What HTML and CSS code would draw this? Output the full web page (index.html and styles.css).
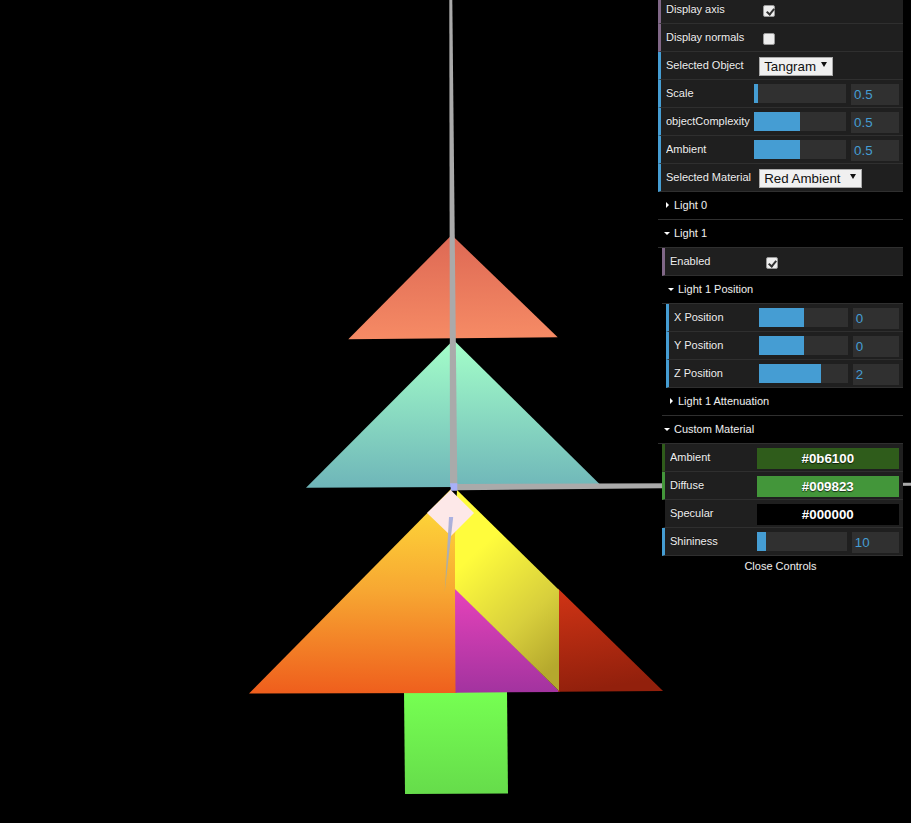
FILE: index.html
```html
<!DOCTYPE html>
<html lang="en">
<head>
<meta charset="utf-8">
<title>Tangram</title>
<link rel="stylesheet" href="styles.css">
</head>
<body>
<svg class="scene" viewBox="0 0 911 823" width="911" height="823" aria-hidden="true">
  <defs>
    <linearGradient id="gRed" gradientUnits="userSpaceOnUse" x1="452" y1="235" x2="454" y2="339"><stop offset="0" stop-color="#dd6854"/><stop offset="1" stop-color="#f68b65"/></linearGradient>
    <linearGradient id="gTeal" gradientUnits="userSpaceOnUse" x1="454" y1="340" x2="452" y2="488"><stop offset="0" stop-color="#a4ffc9"/><stop offset="1" stop-color="#6fb6b9"/></linearGradient>
    <linearGradient id="gOrange" gradientUnits="userSpaceOnUse" x1="452" y1="489" x2="449" y2="694"><stop offset="0" stop-color="#ffe03a"/><stop offset="0.5" stop-color="#f7a732"/><stop offset="1" stop-color="#ef5f1d"/></linearGradient>
    <linearGradient id="gYellow" gradientUnits="userSpaceOnUse" x1="462" y1="565" x2="556" y2="665"><stop offset="0" stop-color="#fffc3c"/><stop offset="0.6" stop-color="#d8cf3c"/><stop offset="1" stop-color="#b5a82d"/></linearGradient>
    <linearGradient id="gPurple" gradientUnits="userSpaceOnUse" x1="456" y1="590" x2="456" y2="693"><stop offset="0" stop-color="#e642ba"/><stop offset="1" stop-color="#a2339f"/></linearGradient>
    <linearGradient id="gDark" gradientUnits="userSpaceOnUse" x1="559" y1="590" x2="575" y2="692"><stop offset="0" stop-color="#d03415"/><stop offset="1" stop-color="#92200c"/></linearGradient>
    <linearGradient id="gGreen" gradientUnits="userSpaceOnUse" x1="456" y1="692" x2="456" y2="794"><stop offset="0" stop-color="#76ff52"/><stop offset="1" stop-color="#66dc4b"/></linearGradient>
    <linearGradient id="gZ" gradientUnits="userSpaceOnUse" x1="451" y1="517" x2="445" y2="592"><stop offset="0" stop-color="#abb1e2"/><stop offset="1" stop-color="#b0ab80"/></linearGradient>
  </defs>
  <polygon points="451.7,235 557.7,337.3 348.3,339.3" fill="url(#gRed)"/>
  <polygon points="453.5,340 600,484.5 457,487 306,487.8" fill="url(#gTeal)"/>
  <polygon points="404,691 507,691 508,793.5 405,794" fill="url(#gGreen)"/>
  <polygon points="249,693.5 451,489 456,535 456.5,693" fill="url(#gOrange)"/>
  <polygon points="455,588 560,692 455.5,692.7" fill="url(#gPurple)"/>
  <polygon points="558,588.5 663,691 558,691.8" fill="url(#gDark)"/>
  <polygon points="457,490 559,590 559,691 455,589 455,535" fill="url(#gYellow)"/>
  <polygon points="450.7,490 474,513 451,536 427,513" fill="#fde8e8"/>
  <polygon points="449,517 453.2,517 444.7,592" fill="url(#gZ)"/>
  <polygon points="449.3,0 452.3,0 457.3,484 450,484" fill="#aaa"/>
  <polygon points="457,484 911,482.7 911,485.8 457,490.3" fill="#aaa"/>
  <polygon points="450,483.3 457.3,483.3 457.3,490.7 451,490.7" fill="#a8b0f8"/>
</svg>

<div class="gui">
  <div class="row bool"><span class="name">Display axis</span><label class="check on"><input type="checkbox" checked></label></div>
  <div class="row bool"><span class="name">Display normals</span><label class="check"><input type="checkbox"></label></div>
  <div class="row num"><span class="name">Selected Object</span><span class="pickwrap"><select class="pick pick-object"><option>Tangram</option></select></span></div>
  <div class="row num"><span class="name">Scale</span><div class="ctl"><div class="slider"><div class="fill" style="width:4.4%"></div></div><div class="value">0.5</div></div></div>
  <div class="row num"><span class="name">objectComplexity</span><div class="ctl"><div class="slider"><div class="fill" style="width:50%"></div></div><div class="value">0.5</div></div></div>
  <div class="row num"><span class="name">Ambient</span><div class="ctl"><div class="slider"><div class="fill" style="width:50%"></div></div><div class="value">0.5</div></div></div>
  <div class="row num"><span class="name">Selected Material</span><span class="pickwrap"><select class="pick pick-material"><option>Red Ambient</option></select></span></div>

  <div class="title closed">Light 0</div>
  <div class="title open">Light 1</div>
  <div class="nest">
    <div class="row bool"><span class="name">Enabled</span><label class="check on"><input type="checkbox" checked></label></div>
    <div class="title open">Light 1 Position</div>
    <div class="nest">
      <div class="row num"><span class="name">X Position</span><div class="ctl"><div class="slider"><div class="fill" style="width:50%"></div></div><div class="value">0</div></div></div>
      <div class="row num"><span class="name">Y Position</span><div class="ctl"><div class="slider"><div class="fill" style="width:50%"></div></div><div class="value">0</div></div></div>
      <div class="row num"><span class="name">Z Position</span><div class="ctl"><div class="slider"><div class="fill" style="width:70%"></div></div><div class="value">2</div></div></div>
    </div>
    <div class="title closed">Light 1 Attenuation</div>
  </div>
  <div class="title open">Custom Material</div>
  <div class="nest">
    <div class="row swatch-ambient"><span class="name">Ambient</span><div class="ctl"><div class="hex hex-ambient">#0b6100</div></div></div>
    <div class="row swatch-diffuse"><span class="name">Diffuse</span><div class="ctl"><div class="hex hex-diffuse">#009823</div></div></div>
    <div class="row swatch-specular"><span class="name">Specular</span><div class="ctl"><div class="hex hex-specular">#000000</div></div></div>
    <div class="row num"><span class="name">Shininess</span><div class="ctl"><div class="slider"><div class="fill" style="width:10%"></div></div><div class="value">10</div></div></div>
  </div>
  <div class="close">Close Controls</div>
</div>
</body>
</html>
```
FILE: styles.css
```css
html, body {
  margin: 0;
  height: 100%;
  background: #000;
  overflow: hidden;
}
body {
  font-family: "Liberation Sans", Arial, sans-serif;
}
.scene {
  position: absolute;
  left: 0;
  top: 0;
  display: block;
}
.gui {
  position: absolute;
  left: 658px;
  top: -4px;
  width: 245px;
  font-size: 11px;
  color: #eee;
  text-shadow: 0 -1px 0 #111;
}
.nest {
  margin-left: 4px;
}
.row {
  display: flex;
  box-sizing: border-box;
  height: 28px;
  padding: 0 4px 0 5px;
  background: #1f1f1f;
  border-left: 3px solid #2fa1d6;
  border-bottom: 1px solid #2f2f2f;
  line-height: 27px;
}
.bool { border-left-color: #806787; }
.num { border-left-color: #459dd3; }
.swatch-ambient { border-left-color: #2f5c1b; }
.swatch-diffuse { border-left-color: #43963a; }
.swatch-specular { border-left-color: #000; }
.name {
  flex: 0 0 40%;
  white-space: nowrap;
  overflow: hidden;
}
.ctl {
  display: flex;
  flex: 0 0 calc(60% + 5px);
  margin-left: -5px;
  justify-content: space-between;
  align-items: flex-start;
}
.check {
  position: relative;
  box-sizing: border-box;
  width: 12px;
  height: 12px;
  margin: 9px 0 0 4px;
  background: #eee;
  border: 1px solid #9a9a9a;
  border-radius: 2px;
}
.check input {
  position: absolute;
  inset: 0;
  width: 100%;
  height: 100%;
  margin: 0;
  opacity: 0;
}
.check.on::after {
  content: "";
  position: absolute;
  left: 3.5px;
  top: 0.5px;
  width: 3px;
  height: 6px;
  border: solid #333;
  border-width: 0 2px 2px 0;
  transform: rotate(40deg);
}
.pickwrap {
  position: relative;
  align-self: flex-start;
  margin-top: 5px;
  height: 19px;
}
.pickwrap::after {
  content: "";
  position: absolute;
  right: 6px;
  top: 5px;
  border-top: 5px solid #111;
  border-left: 3px solid transparent;
  border-right: 3px solid transparent;
  pointer-events: none;
}
.pick {
  appearance: none;
  display: block;
  box-sizing: border-box;
  height: 19px;
  margin: 0;
  padding: 0 0 0 4px;
  background: #f0f0f0;
  border: 1px solid #a9a9a9;
  border-radius: 0;
  color: #111;
  font-family: "Liberation Sans", Arial, sans-serif;
  font-size: 13.33px;
  line-height: 17px;
}
.pick-object { width: 74px; }
.pick-material { width: 103px; }
.slider {
  flex: 0 0 63.6%;
  height: 19px;
  margin-top: 4px;
  background: #303030;
}
.fill {
  height: 100%;
  background: #459dd3;
}
.value {
  flex: 0 0 33.1%;
  box-sizing: border-box;
  height: 21px;
  margin-top: 4px;
  padding-left: 3px;
  background: #303030;
  color: #459dd3;
  font-size: 13.33px;
  line-height: 22px;
  text-shadow: none;
}
.hex {
  flex: 1 1 auto;
  height: 21px;
  margin-top: 4px;
  font-size: 13.33px;
  font-weight: bold;
  line-height: 22px;
  text-align: center;
  color: #fff;
  text-shadow: rgba(0, 0, 0, 0.7) 0 1px 1px;
}
.hex-ambient { background: #2f5c1b; }
.hex-diffuse { background: #43963a; }
.hex-specular { background: #000; }
.title {
  position: relative;
  box-sizing: border-box;
  height: 28px;
  padding-left: 16px;
  line-height: 27px;
  background: #000;
  border-bottom: 1px solid #2f2f2f;
}
.title::before {
  content: "";
  position: absolute;
  width: 0;
  height: 0;
}
.closed::before {
  left: 8px;
  top: 10px;
  border-left: 3px solid #fff;
  border-top: 3px solid transparent;
  border-bottom: 3px solid transparent;
}
.open::before {
  left: 6px;
  top: 12px;
  border-top: 3px solid #fff;
  border-left: 3px solid transparent;
  border-right: 3px solid transparent;
}
.close {
  height: 20px;
  line-height: 20px;
  text-align: center;
  background: #000;
}
```
